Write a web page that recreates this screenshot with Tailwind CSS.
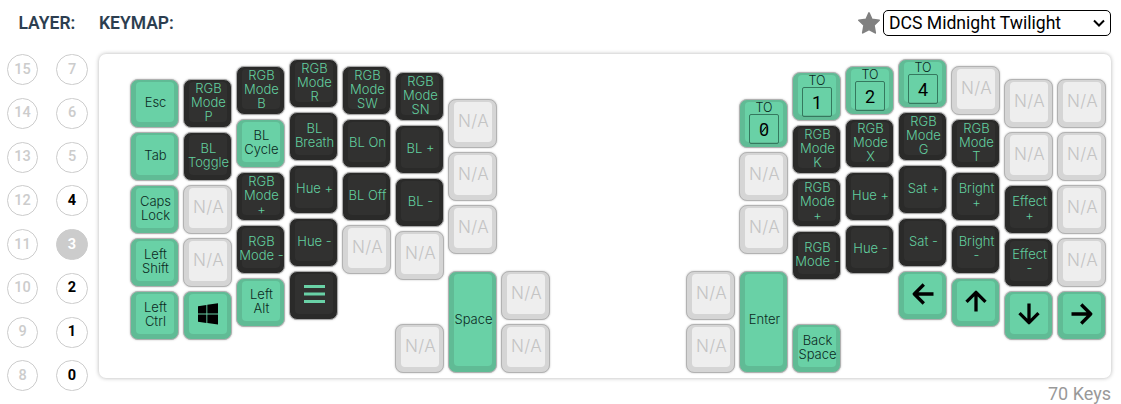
<!DOCTYPE html>
<html lang="en">
<head>
<meta charset="utf-8">
<title>Keymap</title>
<script src="https://cdn.jsdelivr.net/npm/@tailwindcss/browser@4"></script>
</head>
<body class="w-[1121px] h-[404px] overflow-hidden bg-white font-['Roboto',sans-serif] pr-[10px]">
<header class="flex items-center h-[46px] pl-[18.5px] text-[#2c3e50] text-[17.5px] font-semibold">
  <span class="w-[80.5px]">LAYER:</span>
  <span class="flex-1">KEYMAP:</span>
  <svg class="w-6 h-6 mr-[2px]" viewBox="0 0 24 24" fill="#808080" stroke="#808080" stroke-width="1.6" stroke-linejoin="round"><path d="M12 1.9 14.9 8.3 22.2 9.2 17 14.3 18.3 21.9 12 18.6 5.7 21.9 7 14.3 1.8 9.2 9.1 8.3Z"/></svg>
  <div class="flex items-center justify-between w-[228px] h-[26px] rounded-[5px] border border-black bg-white pl-[5px] pr-[5px] text-black text-[17.6px] font-normal">
    <span>DCS Midnight Twilight</span>
    <svg class="w-3 h-2" viewBox="0 0 12 8" fill="none" stroke="#000" stroke-width="2"><path d="M1 1.5 6 6.5 11 1.5"/></svg>
  </div>
</header>
<main class="flex pl-[7px] pt-[8px]">
  <div id="layers" class="grid grid-cols-[31px_32px] gap-x-[18px] auto-rows-[43.75px] h-[350px] w-[92px] text-[14.5px] font-medium"></div>
  <div class="w-[1012px]">
    <section id="board" class="flex gap-1 h-[324px] rounded-[7px] bg-white pl-[31px] shadow-[0_0_4px_rgba(0,0,0,0.3)]"></section>
    <div class="text-right text-[18px] leading-[32px] text-[#999]">70 Keys</div>
  </div>
</main>
<script>
const layers = document.getElementById('layers');
for (let n = 7; n >= 0; n--) {
  layers.insertAdjacentHTML('beforeend',
    `<span class="flex items-center justify-center size-[31px] rounded-full border border-[#ccc] text-[#ccc]">${n + 8}</span>`);
  const cls = n === 3 ? 'bg-[#ccc] text-white font-bold' : n < 5 ? 'text-black font-bold' : 'text-[#ccc]';
  layers.insertAdjacentHTML('beforeend',
    `<span class="flex items-center justify-center w-8 h-[31px] rounded-full border border-[#ccc] ${cls}">${n}</span>`);
}

const arrow = (d) => `<svg class="size-[22px]" viewBox="0 0 22 22" fill="none" stroke="#000" stroke-width="3.3" stroke-linejoin="round"><path d="${d}"/></svg>`;
const icons = {
  '@left': arrow('M21.5 11H3M11.8 1.5 2.3 11 11.8 20.5'),
  '@up': arrow('M11 21.5V3M1.5 11.8 11 2.3 20.5 11.8'),
  '@down': arrow('M11 .5V19M1.5 10.2 11 19.7 20.5 10.2'),
  '@right': arrow('M.5 11H19M10.2 1.5 19.7 11 10.2 20.5'),
  '@win': '<svg class="w-5 h-[22px]" viewBox="0 0 20 22"><path d="M0 3.3 8.4 2V10.5H0ZM9.3 1.8 20 .3V10.5H9.3ZM0 11.5H8.4V19.9L0 18.7ZM9.3 11.5H20V21.6L9.3 20.1Z"/></svg>',
  '@menu': '<svg class="w-[21px] h-[18px]" viewBox="0 0 21 18" fill="#69d1a6"><path d="M0 0H21V3H0ZM0 7.5H21V10.5H0ZM0 15H21V18H0Z"/></svg>',
};
const themes = {
  g: ['bg-[#60bb95] border-[#b0b0b0]', 'bg-[#69d1a6] text-[#0c2a1f]'],
  d: ['bg-[#2a2a29] border-[#a9a9a9]', 'bg-[#313130] text-[#62cf9f]'],
  n: ['bg-[#d5d5d5] border-[#b2b2b2]', 'bg-[#eeeeee] text-[#c4c4c4]'],
};
// Each column: pixel drop, then keys as "theme:label"; "_N" is a vertical gap of N pixels.
const columns = [
  [25, 'g:Esc', 'g:Tab', 'g:Caps|Lock', 'g:Left|Shift', 'g:Left|Ctrl'],
  [25, 'd:RGB|Mode|P', 'd:BL|Toggle', 'n', 'n', 'g:@win'],
  [12, 'd:RGB|Mode|B', 'g:BL|Cycle', 'd:RGB|Mode|+', 'd:RGB|Mode -', 'g:Left|Alt'],
  [5, 'd:RGB|Mode|R', 'd:BL|Breath', 'd:Hue +', 'd:Hue -', 'd:@menu'],
  [12, 'd:RGB|Mode|SW', 'd:BL On', 'd:BL Off', 'n'],
  [18, 'd:RGB|Mode|SN', 'd:BL +', 'd:BL -', 'n', '_36', 'n'],
  [45, 'n', 'n', 'n', '_9', 'G:Space'],
  [217, 'n', 'n'],
  'gap',
  [217, 'n', 'n'],
  [45, 'g:#0', 'n', 'n', '_9', 'G:Enter'],
  [18, 'g:#1', 'd:RGB|Mode|K', 'd:RGB|Mode|+', 'd:RGB|Mode -', '_36', 'g:Back|Space'],
  [12, 'g:#2', 'd:RGB|Mode|X', 'd:Hue +', 'd:Hue -'],
  [5, 'g:#4', 'd:RGB|Mode|G', 'd:Sat +', 'd:Sat -', 'g:@left'],
  [12, 'n', 'd:RGB|Mode|T', 'd:Bright|+', 'd:Bright|-', 'g:@up'],
  [25, 'n', 'n', 'd:Effect|+', 'd:Effect|-', 'g:@down'],
  [25, 'n', 'n', 'n', 'n', 'g:@right'],
];
function key(spec) {
  if (spec[0] === '_') return `<div style="height:${spec.slice(1)}px"></div>`;
  const [kind, label = ''] = spec.split(':');
  const [outer, face] = themes[kind.toLowerCase()];
  const tall = kind === 'G' ? 'h-[102px] pb-[6px]' : 'h-[49px] pb-[5px]';
  let body;
  if (kind === 'n') body = '<span class="text-[17px] tracking-[0.3px] font-[350] font-[\'Inter\',sans-serif] ml-[1px]">N/A</span>';
  else if (label[0] === '@') body = icons[label];
  else if (label[0] === '#') {
    const slash = label === '#0' ? '<svg class="absolute w-[6px] h-[9px]" viewBox="0 0 6 9" stroke="#000" stroke-width="1.2"><path d="M1 7 5 2"/></svg>' : '';
    body = `<div class="flex flex-col items-center self-start -mt-[1px]"><span class="text-[12.5px] leading-[13px] font-light font-['Inter',sans-serif]">TO</span>
      <span class="relative flex items-center justify-center size-[30px] border border-[#35785e] rounded-[2px] text-[18px] text-black">${label[1]}${slash}</span></div>`;
  } else body = `<span class="text-center whitespace-nowrap text-[13px] leading-[14px] font-[350] font-['Inter',sans-serif] ml-[1px] ${kind === 'G' ? '-mt-[2px]' : ''}">${label.replaceAll('|', '<br>')}</span>`;
  return `<div class="shrink-0 w-[49px] ${tall} rounded-[8px] border shadow-[0_0_2px_rgba(0,0,0,0.25)] pt-[2px] pl-[5px] pr-[4px] ${outer}">
    <div class="flex items-center justify-center h-full rounded-[4px] ${face}">${body}</div></div>`;
}
document.getElementById('board').innerHTML = columns.map(c => c === 'gap'
  ? '<div class="w-32"></div>'
  : `<div class="flex flex-col gap-1 w-[49px] shrink-0" style="padding-top:${c[0]}px">${c.slice(1).map(key).join('')}</div>`).join('');
</script>
</body>
</html>
